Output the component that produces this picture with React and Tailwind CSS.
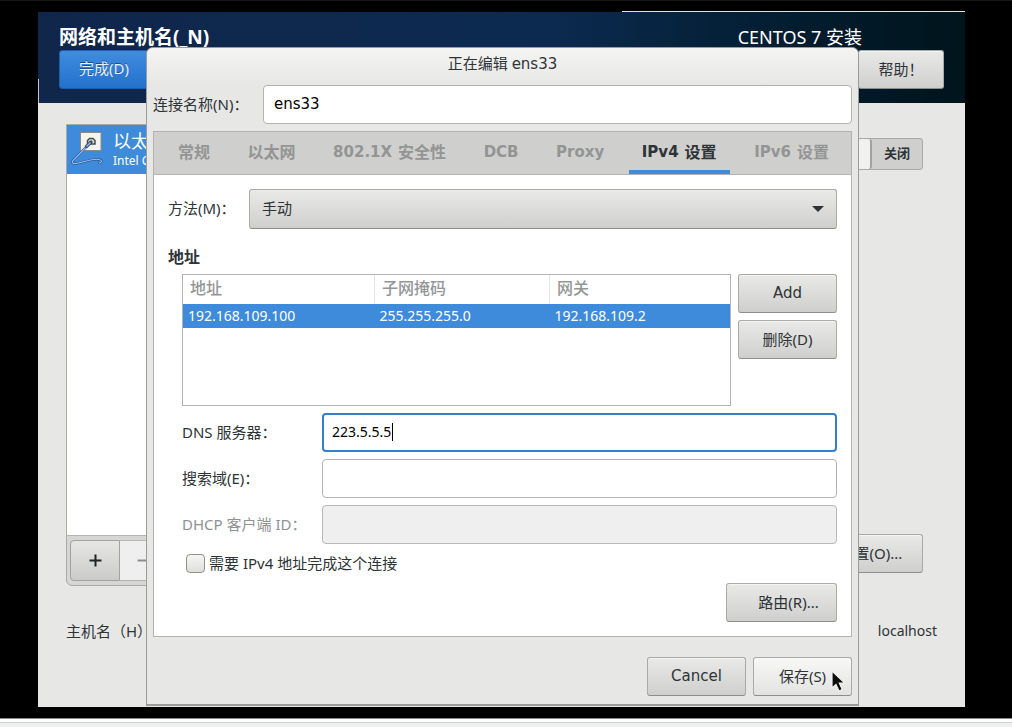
import React from "react";

const raised =
  "flex h-[39px] items-center justify-center rounded-[3px] border border-[#a9aba8] border-b-[#8c8e8b] bg-linear-to-b from-[#e9e9e8] to-[#cfcfcd] pb-[2px] text-[15px] leading-[20px] text-[#2e3436] shadow-[inset_0_1px_0_#f4f4f3]";

const field =
  "h-[39px] w-full min-w-0 rounded-[4px] border px-[10px] pb-[2px] leading-[20px] outline-none";

const tabs = [
  { cjk: "常规" },
  { cjk: "以太网" },
  { latin: "802.1X", cjk: "安全性" },
  { latin: "DCB" },
  { latin: "Proxy" },
  { latin: "IPv4", cjk: "设置", active: true },
  { latin: "IPv6", cjk: "设置" },
];

function NetworkIcon() {
  return (
    <svg width="36" height="37" viewBox="0 0 36 37" className="shrink-0" aria-hidden="true">
      <rect x="11.5" y="1.500" width="20.500" height="18" fill="#f4f4f1" stroke="#8f8b7c" />
      <path d="M18.500 13V9.500l2-2h3.500l2 2V13z" fill="#dcdcd8" stroke="#4a4c48" strokeWidth="1.500" />
      <path d="M21.500 11.500L4 29.500c-2 3 1 3.300 4 2.800 8-1.300 16-5 22-3.800 3.500 .8 3 2.500 .5 3.500" fill="none" stroke="#24579a" strokeWidth="2.400" strokeLinecap="round" />
      <path d="M21.500 11.500L4 29.500c-2 3 1 3.300 4 2.800 8-1.300 16-5 22-3.800 3.500 .8 3 2.500 .5 3.500" fill="none" stroke="#a3c3ea" strokeWidth="1.100" strokeLinecap="round" />
      <path d="M22 11l-4.500 4.500" stroke="#36506f" strokeWidth="3.200" strokeLinecap="round" />
      <path d="M21.500 11.500l-4 4" stroke="#8fb4e2" strokeWidth="1.400" />
    </svg>
  );
}

function Installer() {
  return (
    <div className="flex grow flex-col bg-[#e7e7e6]">
      <header className="relative flex h-[91px] items-start justify-between bg-linear-to-r from-[#10264b] via-[#0c2a50] via-55% to-[#00141b] pr-[21px] pl-[21px] pt-[12px] text-white">
        <div className="absolute top-[-1px] right-0 h-px w-[37%] bg-[#e4e2dc]" />
        <div className="absolute bottom-0 left-0 h-[24px] w-px bg-[#c7c9cc]" />
        <div>
          <h1 className="text-[19px] leading-[26px] font-bold">网络和主机名(_N)</h1>
          <button className="flex h-[39px] w-[90px] items-center justify-center rounded-[3px] border border-[#1c5fb0] bg-linear-to-b from-[#3f8ce0] to-[#2371cb] pb-[3px] text-[15px] leading-[20px] text-[#e9f1fb] [text-shadow:0_-1px_#1d4f91]">
            完成(D)
          </button>
        </div>
        <div className="flex flex-col items-end">
          <div className="mr-[82px] text-[18px] leading-[26px]">CENTOS 7 安装</div>
          <button className={`${raised} w-[86px]`}>帮助！</button>
        </div>
      </header>

      <main className="flex grow flex-col px-[28px] pt-[21px]">
        <div className="flex justify-between pr-[14px]">
          <section className="flex h-[462px] w-[300px] flex-col rounded-b-[6px] border border-[#a9aba8] bg-[#d6d6d5]">
            <div className="grow border-b border-[#b4b6b3] bg-white">
              <div className="flex h-[49px] items-center gap-[8px] bg-[#3f8bdb] pl-[2px] text-white">
                <NetworkIcon />
                <div>
                  <div className="text-[18px] leading-[22px] whitespace-nowrap">以太网</div>
                  <div className="text-[12px] leading-[18px] whitespace-nowrap">Intel Corp</div>
                </div>
              </div>
            </div>
            <div className="flex p-[4px] pl-[3px]">
              <button aria-label="+" className="flex h-[41px] w-[50px] items-center justify-center rounded-l-[4px] border border-[#a1a3a0] bg-linear-to-b from-[#e6e6e5] to-[#cbcbca]">
                <svg width="13" height="13" viewBox="0 0 13 13"><path d="M6.500 .5v12M.5 6.500h12" stroke="#1f2324" strokeWidth="2" /></svg>
              </button>
              <button aria-label="−" className="flex h-[41px] w-[50px] items-center justify-center rounded-r-[4px] border border-l-0 border-[#b4b6b3] bg-[#eeefee]">
                <svg width="15" height="13" viewBox="0 0 15 13"><path d="M.5 6.500h14" stroke="#8b8e8f" strokeWidth="2" /></svg>
              </button>
            </div>
          </section>

          <section className="flex flex-col items-end justify-between pt-[14px] pb-[13px]">
            <button role="switch" aria-checked="false" className="flex h-[32px] w-[102px] rounded-[3px] border border-[#a9aba8] bg-[#cfcfce] text-[13px] leading-[28px] font-bold text-[#2e3436]">
              <span className="h-[30px] w-1/2 rounded-[3px] border-r-2 border-[#a1a3a0] bg-[#f1f1f0]" />
              <span className="w-1/2 text-center">关闭</span>
            </button>
            <button className={`${raised} w-[104px]`}>配置(O)...</button>
          </section>
        </div>
        <div className="mt-[33px] flex items-center justify-between text-[14px] leading-[24px] text-[#2e3436]">
          <span className="text-[15px]">主机名（H）</span>
          <span>localhost</span>
        </div>
      </main>
    </div>
  );
}

function AddressTable() {
  return (
    <div className="h-[132px] min-w-0 grow border border-[#b2b4b1] bg-white">
      <table className="w-full table-fixed border-collapse text-left">
        <colgroup>
          <col className="w-[35%]" />
          <col className="w-[32%]" />
          <col className="w-[33%]" />
        </colgroup>
        <thead>
          <tr className="h-[29px] text-[16px] leading-[20px] text-[#939697]">
            <th className="border-r border-[#e4e5e4] p-0 pb-[4px] pl-[7px] font-medium">地址</th>
            <th className="border-r border-[#e4e5e4] p-0 pb-[4px] pl-[7px] font-medium">子网掩码</th>
            <th className="p-0 pb-[4px] pl-[7px] font-medium">网关</th>
          </tr>
        </thead>
        <tbody>
          <tr className="h-[24px] bg-[#3f8bdb] text-[14px] leading-[20px] text-white">
            <td className="p-0 pl-[5px]">192.168.109.100</td>
            <td className="p-0 pl-[5px]">255.255.255.0</td>
            <td className="p-0 pl-[5px]">192.168.109.2</td>
          </tr>
        </tbody>
      </table>
    </div>
  );
}

function Dialog() {
  return (
    <div
      role="dialog"
      aria-labelledby="dialog-title"
      className="absolute top-[35px] right-[106px] left-[108px] rounded-t-[7px] border border-b-2 border-[#9a9c99] bg-[#e7e7e6] px-[6px] pb-[8px] text-[15px] leading-[20px] text-[#2e3436]"
    >
      <h2 id="dialog-title" className="mx-[-6px] h-[37px] rounded-t-[6px] bg-linear-to-b from-[#f4f4f3] to-[#e7e7e6] pt-[5px] text-center">
        正在编辑 <span className="font-['DejaVu_Sans']">ens33</span>
      </h2>

      <div className="flex items-center">
        <label htmlFor="name" className="w-[110px] shrink-0 pb-[2px] whitespace-nowrap">连接名称(N)：</label>
        <input id="name" defaultValue="ens33" className={`${field} border-[#b2b4b1] bg-white font-['DejaVu_Sans'] text-black`} />
      </div>

      <div className="mt-[7px] border border-[#b2b4b1] bg-white">
        <div role="tablist" className="flex h-[43px] justify-between border-b border-[#b2b4b1] bg-[#cfcfce] pr-[9px] pl-[11px]">
          {tabs.map((t) => (
            <button
              key={(t.latin || "") + (t.cjk || "")}
              role="tab"
              aria-selected={!!t.active}
              className={`flex items-center gap-[6px] border-b-4 px-[13px] pt-[2px] text-[16px] font-bold whitespace-nowrap ${
                t.active ? "border-b-[#3f8bdb] text-[#2e3436]" : "border-b-transparent text-[#939594]"
              }`}
            >
              {t.latin && <span className="font-['DejaVu_Sans'] text-[15px]">{t.latin}</span>}
              {t.cjk && <span>{t.cjk}</span>}
            </button>
          ))}
        </div>

        <div className="px-[14px] pt-[14px] pb-[14px]">
          <div className="flex items-center">
            <label htmlFor="method" className="w-[81px] shrink-0 pb-[2px] whitespace-nowrap">方法(M)：</label>
            <div className="relative grow">
              <select id="method" className="block h-[40px] w-full appearance-none rounded-[3px] border border-[#a9aba8] border-b-[#8c8e8b] bg-linear-to-b from-[#e9e9e8] to-[#cfcfcd] px-[12px] pb-[3px] outline-none">
                <option>手动</option>
              </select>
              <svg width="12" height="6" viewBox="0 0 12 6" className="pointer-events-none absolute top-[17px] right-[13px]">
                <path d="M0 0h12L6 6z" fill="#2e3436" />
              </svg>
            </div>
          </div>

          <h3 className="mt-[18px] mb-[7px] text-[16px] font-bold">地址</h3>

          <div className="pl-[14px]">
            <div className="flex gap-[7px]">
              <AddressTable />
              <div className="flex w-[99px] shrink-0 flex-col gap-[7px]">
                <button className={`${raised} font-['DejaVu_Sans']`}>Add</button>
                <button className={raised}>删除(D)</button>
              </div>
            </div>

            <div className="mt-[7px] grid grid-cols-[140px_1fr] items-center gap-y-[7px]">
              <label htmlFor="dns" className="pb-[2px]">DNS 服务器：</label>
              <div className="flex h-[39px] items-center rounded-[4px] border-2 border-[#357fc9] bg-white pb-[1px] pl-[8px] text-[14px] text-black">
                <input id="dns" defaultValue="223.5.5.5" className="w-[60px] bg-transparent outline-none" />
                <span className="h-[18px] w-px bg-black" />
              </div>
              <label htmlFor="search" className="pb-[2px]">搜索域(E)：</label>
              <input id="search" className={`${field} border-[#b2b4b1] bg-white`} />
              <label htmlFor="dhcp" className="pb-[2px] text-[#8f9293]">DHCP 客户端 ID：</label>
              <input id="dhcp" disabled className={`${field} border-[#b8bab7] bg-[#eeefee]`} />
            </div>

            <label className="mt-[9px] flex items-center gap-[4px] pl-[4px]">
              <input type="checkbox" className="size-[19px] appearance-none rounded-[4px] border border-[#8f918e] bg-linear-to-b from-[#f6f6f5] to-[#dededd]" />
              需要 IPv4 地址完成这个连接
            </label>

            <div className="mt-[10px] flex justify-end">
              <button className={`${raised} w-[111px] pl-[14px]`}>路由(R)...</button>
            </div>
          </div>
        </div>
      </div>

      <div className="mt-[20px] flex justify-end gap-[7px]">
        <button className={`${raised} w-[99px] font-['DejaVu_Sans']`}>Cancel</button>
        <button className="relative flex h-[39px] w-[99px] items-center justify-center rounded-[3px] border border-[#a9aba8] border-b-[#8c8e8b] bg-linear-to-b from-[#f8f8f7] to-[#e3e3e2] pb-[2px]">
          保存(S)
          <svg width="15" height="23" viewBox="0 0 15 23" className="absolute top-[12px] left-[77px]" aria-hidden="true">
            <path d="M1 1v17l4-3.600 3 6.600 3.300-1.500-3-6.500h5.400z" fill="#0c0c0c" stroke="#f2f2f2" strokeWidth="1.200" />
          </svg>
        </button>
      </div>
    </div>
  );
}

export default function App() {
  return (
    <div className="flex min-h-screen flex-col border-t border-[#141617] bg-black font-['Noto_Sans','Noto_Sans_CJK_SC',sans-serif]">
      <div className="relative mt-[11px] mr-[47px] ml-[38px] flex grow flex-col">
        <Installer />
        <Dialog />
      </div>
      <footer className="mt-[11px] h-[9px] border-t border-[#8a8a8a] bg-white pt-[3px]">
        <div className="h-[5px] border-t border-[#cfd1d0] bg-[#eef0ef]" />
      </footer>
    </div>
  );
}
